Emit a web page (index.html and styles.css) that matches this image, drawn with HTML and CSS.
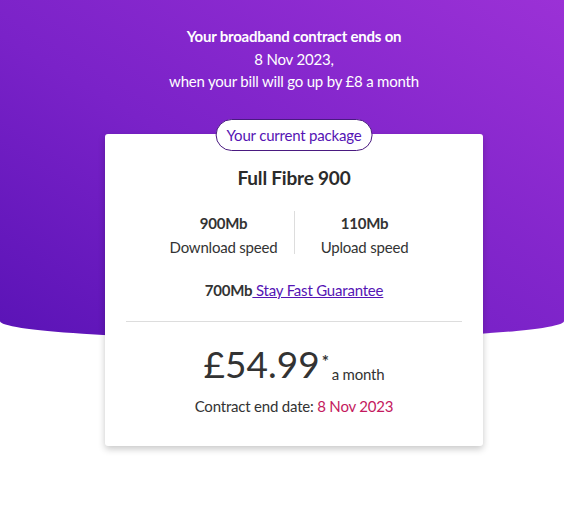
FILE: index.html
```html
<!DOCTYPE html>
<html lang="en">
<head>
<meta charset="utf-8">
<title>Your current package</title>
<link rel="stylesheet" href="styles.css">
</head>
<body>
<main class="hero">
  <div class="content">
    <section class="intro">
      <p class="intro-title">Your broadband contract ends on</p>
      <p>8 Nov 2023,</p>
      <p>when your bill will go up by £8 a month</p>
    </section>
    <section class="card">
      <div class="pill">Your current package</div>
      <h2 class="plan">Full Fibre 900</h2>
      <div class="speeds">
        <div class="speed">
          <strong>900Mb</strong>
          <span>Download speed</span>
        </div>
        <div class="divider"></div>
        <div class="speed">
          <strong>110Mb</strong>
          <span>Upload speed</span>
        </div>
      </div>
      <p class="guarantee"><strong>700Mb</strong><a href="#"> Stay Fast Guarantee</a></p>
      <hr class="rule">
      <p class="price"><span class="amount">£54.99</span><sup class="star">*</sup><span class="per">a month</span></p>
      <p class="end">Contract end date: <span class="date">8 Nov 2023</span></p>
    </section>
  </div>
</main>
</body>
</html>
```
FILE: styles.css
```css
html, body {
  margin: 0;
  padding: 0;
  background: #ffffff;
}
body {
  font-family: Lato, "Noto Sans", sans-serif;
  color: #333333;
  width: 564px;
  height: 526px;
  overflow: hidden;
  letter-spacing: -0.2px;
}
.hero {
  position: relative;
  z-index: 0;
  display: block;
}
.hero::before {
  content: "";
  position: absolute;
  left: 0;
  right: 0;
  top: 0;
  height: 339px;
  background: linear-gradient(to top right, #5a13b6 0%, #7a22c8 45%, #9b31d6 100%);
  border-radius: 0 0 50% 50% / 0 0 18px 18px;
  z-index: -1;
}
.content {
  padding: 25px 0 0 24px;
  display: flex;
  flex-direction: column;
  align-items: center;
}
.intro {
  text-align: center;
  color: #ffffff;
  font-size: 15px;
  line-height: 22.5px;
}
.intro p {
  margin: 0;
}
.intro-title {
  font-weight: 700;
}
.card {
  position: relative;
  margin-top: 41px;
  width: 378px;
  box-sizing: border-box;
  background: #ffffff;
  border-radius: 3px;
  box-shadow: 0 3px 7px rgba(0, 0, 0, 0.22);
  padding: 32px 21px 28px;
  display: flex;
  flex-direction: column;
  align-items: center;
}
.pill {
  position: absolute;
  top: -15px;
  left: 50%;
  transform: translateX(-50%);
  background: #ffffff;
  border: 1px solid #4a1a80;
  border-radius: 16px;
  padding: 0 10px;
  height: 30px;
  line-height: 30px;
  font-size: 15px;
  color: #5514b4;
  white-space: nowrap;
}
.plan {
  margin: 0;
  font-size: 19px;
  line-height: 24px;
  font-weight: 700;
  color: #2b2b2b;
}
.speeds {
  margin-top: 21px;
  display: flex;
  align-items: flex-start;
}
.speed {
  width: 140px;
  display: flex;
  flex-direction: column;
  align-items: center;
  font-size: 15px;
  line-height: 24px;
}
.speed strong {
  font-weight: 700;
}
.divider {
  width: 1px;
  height: 43px;
  background: #dddddd;
}
.guarantee {
  margin: 19px 0 0;
  font-size: 15px;
  line-height: 24px;
}
.guarantee a {
  color: #5514b4;
  text-decoration: underline;
}
.rule {
  align-self: stretch;
  margin: 19px 0 0;
  border: 0;
  border-top: 1px solid #dddddd;
  height: 0;
}
.price {
  margin: 22px 0 0;
  line-height: 40px;
  display: flex;
  align-items: baseline;
}
.amount {
  font-size: 37px;
  color: #333333;
  letter-spacing: 0;
}
.star {
  font-size: 17px;
  font-weight: 700;
  align-self: flex-start;
  line-height: 20px;
  margin: 8px 0 0 2px;
}
.per {
  font-size: 15px;
  margin-left: 3px;
  position: relative;
  top: 2px;
}
.end {
  margin: 2px 0 0;
  font-size: 15px;
  line-height: 24px;
}
.date {
  color: #c4195e;
}
```
